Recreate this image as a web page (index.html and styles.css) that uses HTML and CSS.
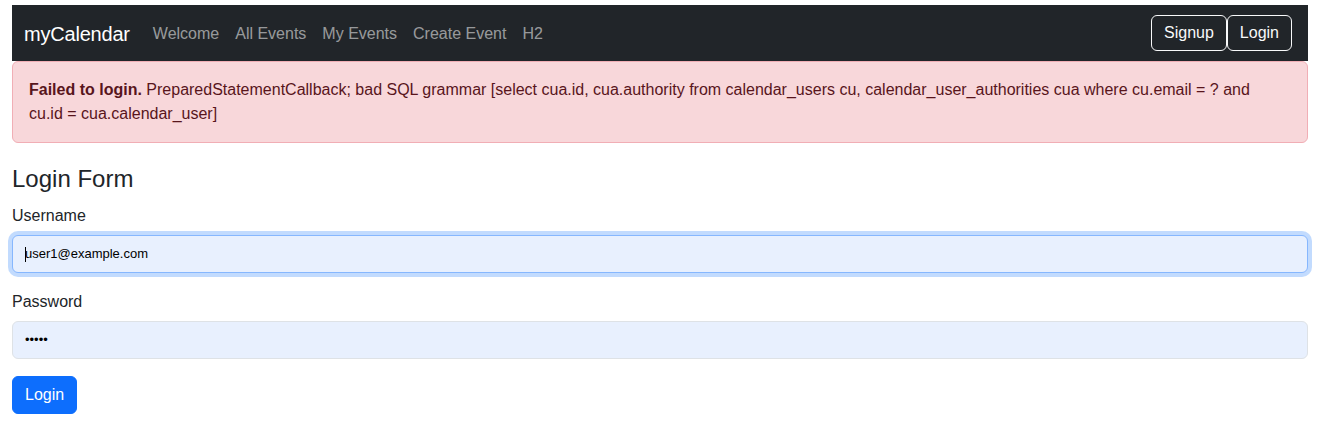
FILE: index.html
```html
<!DOCTYPE html>
<html lang="en">
<head>
<meta charset="utf-8">
<title>myCalendar - Login</title>
<link rel="stylesheet" href="styles.css">
</head>
<body>
<div class="page">
  <nav class="navbar">
    <a class="brand" href="#">myCalendar</a>
    <ul class="nav-links">
      <li><a href="#">Welcome</a></li>
      <li><a href="#">All Events</a></li>
      <li><a href="#">My Events</a></li>
      <li><a href="#">Create Event</a></li>
      <li><a href="#">H2</a></li>
    </ul>
    <div class="nav-actions">
      <a class="btn-outline" href="#">Signup</a>
      <a class="btn-outline" href="#">Login</a>
    </div>
  </nav>

  <div class="alert"><strong>Failed to login.</strong> PreparedStatementCallback; bad SQL grammar [select cua.id, cua.authority from calendar_users cu, calendar_user_authorities cua where cu.email = ? and cu.id&nbsp;=&nbsp;cua.calendar_user]</div>

  <form class="login-form">
    <h4 class="form-title">Login Form</h4>
    <div class="field">
      <label class="field-label" for="username">Username</label>
      <div class="input-wrap">
        <input class="control control-focus" id="username" type="text" value="user1@example.com">
        <span class="caret"></span>
      </div>
    </div>
    <div class="field">
      <label class="field-label" for="password">Password</label>
      <input class="control" id="password" type="password" value="12345">
    </div>
    <button class="btn-primary" type="button">Login</button>
  </form>
</div>
</body>
</html>
```

FILE: styles.css
```css
* { box-sizing: border-box; }

html, body {
  margin: 0;
  padding: 0;
  background: #fff;
}

body {
  font-family: "Liberation Sans", Arial, sans-serif;
  font-size: 16px;
  line-height: 1.5;
  color: #212529;
}

.page {
  padding: 5px 22px 0 12px;
}

.navbar {
  display: flex;
  align-items: center;
  height: 56px;
  padding: 9px 16px 7px 12px;
  background: #212529;
}

.brand {
  font-size: 20px;
  line-height: 30px;
  padding: 5px 0;
  margin-right: 15px;
  color: #fff;
  text-decoration: none;
  letter-spacing: -0.2px;
}

.nav-links {
  display: flex;
  list-style: none;
  margin: 0;
  padding: 0;
  flex: 1;
}

.nav-links a {
  display: block;
  padding: 8px;
  color: rgba(255, 255, 255, 0.55);
  text-decoration: none;
}

.nav-actions {
  display: flex;
  margin-top: -2px;
}

.btn-outline {
  display: inline-block;
  padding: 5px 12px;
  border: 1px solid #f8f9fa;
  border-radius: 6px;
  color: #f8f9fa;
  text-decoration: none;
  line-height: 24px;
}

.alert {
  padding: 16px;
  margin-bottom: 22px;
  background: #f8d7da;
  border: 1px solid #f1aeb5;
  border-radius: 6px;
  color: #58151c;
}

.alert strong { font-weight: 700; }

.form-title {
  margin: 0 0 10px;
  font-size: 24px;
  font-weight: 500;
  line-height: 1.2;
}

.field {
  margin-bottom: 17px;
}

.field-label {
  display: block;
  margin-bottom: 7px;
}

.input-wrap {
  position: relative;
}

.control {
  display: block;
  width: 100%;
  height: 38px;
  padding: 6px 12px;
  font-family: "Liberation Sans", Arial, sans-serif;
  font-size: 13px;
  color: #000;
  background: #e8f0fe;
  border: 1px solid #dee2e6;
  border-radius: 6px;
  outline: none;
}

.control-focus {
  border-color: #86b7fe;
  box-shadow: 0 0 0 4px rgba(13, 110, 253, 0.25);
}

.caret {
  position: absolute;
  left: 13px;
  top: 12px;
  width: 1px;
  height: 15px;
  background: #000;
}

.btn-primary {
  display: inline-block;
  padding: 6px 12px;
  font-family: "Liberation Sans", Arial, sans-serif;
  font-size: 16px;
  line-height: 24px;
  color: #fff;
  background: #0d6efd;
  border: 1px solid #0d6efd;
  border-radius: 6px;
}
```
